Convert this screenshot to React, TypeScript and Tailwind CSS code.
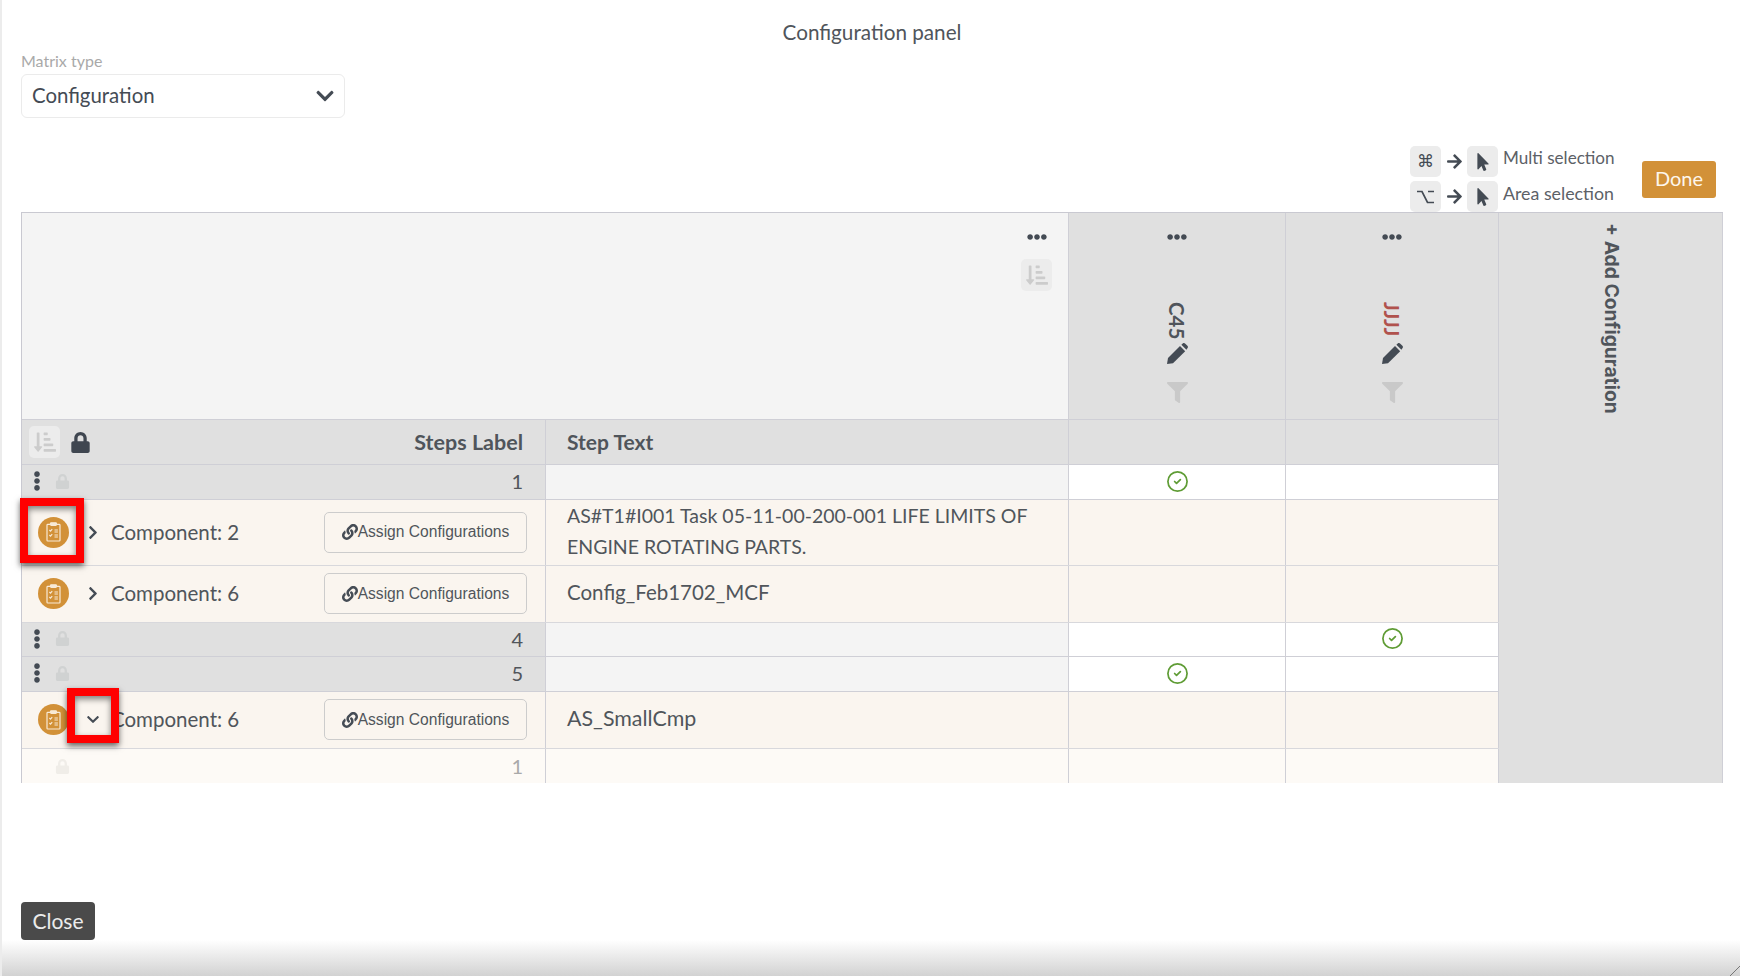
import React from "react";
import {
  FaEllipsisH,
  FaEllipsisV,
  FaFilter,
  FaLock,
  FaSortAmountDownAlt,
  FaLink,
  FaArrowRight,
  FaChevronDown,
  FaChevronRight,
  FaMousePointer,
} from "react-icons/fa";
import { CircleCheck } from "lucide-react";

const cols = "grid grid-cols-[524px_523px_217px_213px]";
const line = "border-r border-[#cfcfd6]";
const font = "font-['Lato','Liberation_Sans',sans-serif]";

function SortBtn() {
  return (
    <div className="w-[31px] h-[32px] rounded-[5px] bg-[#ececec] flex items-center justify-center text-[#cccccc]">
      <FaSortAmountDownAlt size={22} />
    </div>
  );
}

function ClipIcon() {
  return (
    <div className="w-[31px] h-[31px] rounded-full bg-[#d29138] flex items-center justify-center shrink-0">
      <svg width="17" height="20" viewBox="0 0 17 20" fill="none" stroke="#f8ead6" strokeWidth="1.2">
        <rect x="2" y="2.4" width="13" height="16.6" rx="0.8" />
        <rect x="5.5" y="0.8" width="6" height="2.6" rx="0.8" fill="#f8ead6" />
        <path d="M4.4 8l1.1 1.1 1.7-2M4.4 13l1.1 1.1 1.7-2" />
        <path d="M9.5 8h3.4M9.5 10h3.4M9.5 13h3.4M9.5 15h3.4" />
      </svg>
    </div>
  );
}

function Pencil() {
  return (
    <svg width="21" height="21" viewBox="0 0 21 21" fill="#444b54" className="mt-[3px]">
      <path d="M0 21L1 15L13 3L18.2 8.2L6 20.2Z" />
      <path d="M14.4 1.7L15.7 0.6C16.6 -0.1 17.6 0 18.3 0.7L20.4 2.8C21.1 3.6 21.1 4.5 20.4 5.3L19.4 6.7Z" />
    </svg>
  );
}

function CheckCell({ on }: { on?: boolean }) {
  return (
    <div className={`bg-white flex items-center justify-center pb-[2px] ${line}`}>
      {on && <CircleCheck size={23} strokeWidth={1.8} className="text-[#5f9c35]" />}
    </div>
  );
}

function GrayRow({ n, h, a, b }: { n: string; h: string; a?: boolean; b?: boolean }) {
  return (
    <div className={`${cols} ${h} border-b border-[#cfcfd6]`}>
      <div className={`bg-[#e0e0e0] flex items-center pl-[11px] pr-[22px] pb-[2px] ${line}`}>
        <FaEllipsisV size={20} className="text-[#444b54] w-[8px]" />
        <FaLock size={15} className="ml-[14px] text-[#d0d2d2]" />
        <span className="ml-auto text-[20px] text-[#50555b]">{n}</span>
      </div>
      <div className={`bg-[#f4f4f4] ${line}`} />
      <CheckCell on={a} />
      <CheckCell on={b} />
    </div>
  );
}

function CompRow({
  name,
  text,
  h,
  open,
  size,
}: {
  name: string;
  text: React.ReactNode;
  h: string;
  open?: boolean;
  size: string;
}) {
  return (
    <div className={`${cols} ${h} border-b border-[#d8d8dc] bg-[#faf5ef]`}>
      <div className={`flex items-center pl-[16px] pr-[18px] pb-[1px] ${line}`}>
        <ClipIcon />
        <div className="w-[12px] ml-[18px] flex justify-center text-[#454c55]">
          {open ? <FaChevronDown size={15} /> : <FaChevronRight size={15} />}
        </div>
        <span className="ml-[12px] text-[20.5px] text-[#50555b]">{name}</span>
        <button className="ml-auto w-[203px] h-[41px] rounded-[5px] border border-[#cccccc] flex items-center justify-center font-['Liberation_Sans',sans-serif] text-[15.6px] text-[#50555b]">
          <FaLink size={16} className="text-[#454c55]" />
          Assign Configurations
        </button>
      </div>
      <div className={`flex items-center pl-[21px] pr-[20px] pb-[3px] leading-[31px] text-[#50555b] ${size} ${line}`}>
        <div>{text}</div>
      </div>
      <div className={line} />
      <div className={line} />
    </div>
  );
}

function ColHead({ label, red }: { label: string; red?: boolean }) {
  return (
    <div className={`bg-[#e0e0e0] flex flex-col items-center pt-[14px] ${line}`}>
      <FaEllipsisH size={20} className="text-[#444b54]" />
      <span
        className={`mt-[55px] h-[38px] [writing-mode:vertical-rl] text-[20.5px] leading-[22px] font-bold ${
          red ? "text-[#b0524d]" : "text-[#50555b]"
        }`}
      >
        {label}
      </span>
      <Pencil />
      <FaFilter size={21} className="mt-[18px] text-[#c9c9c9]" />
    </div>
  );
}

function KeyRow({ glyph, label, size }: { glyph: React.ReactNode; label: string; size: string }) {
  return (
    <div className="flex items-center h-[31px]">
      <div className="w-[31px] h-[31px] rounded-[5px] bg-[#ececec] flex items-center justify-center font-['DejaVu_Sans',sans-serif] text-[17px] text-[#444b54]">
        {glyph}
      </div>
      <FaArrowRight size={17} className="mx-[4.5px] text-[#444b54]" />
      <div className="w-[31px] h-[31px] rounded-[5px] bg-[#ececec] flex items-center justify-center text-[#444b54]">
        <FaMousePointer size={18} />
      </div>
      <span className={`ml-[5px] w-[112px] mb-[7px] whitespace-nowrap text-[#5c6167] ${size}`}>{label}</span>
    </div>
  );
}

function OptionGlyph() {
  return (
    <svg width="17" height="14" viewBox="0 0 17 14" fill="none" stroke="#444b54" strokeWidth="1.7">
      <path d="M0 1.5h5l5.5 11H17M11 1.5h6" />
    </svg>
  );
}

export default function App() {
  return (
    <div className={`relative w-[1740px] h-[976px] overflow-hidden bg-white flex flex-col border-l-2 border-[#ececec] text-[#50555b] ${font}`}>
      <div className="pl-[19px] pr-[17px] flex flex-col flex-1">
        <div className="pt-[19px] text-center text-[20.7px] leading-[26px] text-[#50555b]">Configuration panel</div>
        <div className="mt-[6px] text-[16px] leading-[20px] text-[#a9a9a9]">Matrix type</div>
        <div className="mt-[3px] w-[324px] h-[44px] rounded-[6px] border border-[#ebebeb] flex items-center pl-[10px] pr-[9px]">
          <span className="text-[20.4px] pb-[2px] text-[#444b54]">Configuration</span>
          <FaChevronDown size={20} className="ml-auto text-[#444b54]" />
        </div>
        <div className="mt-[28px] h-[66px] flex justify-end items-start">
          <div className="flex flex-col gap-[4px]">
            <KeyRow glyph="⌘" label="Multi selection" size="text-[17.1px]" />
            <KeyRow glyph={<OptionGlyph />} label="Area selection" size="text-[17.8px]" />
          </div>
          <button className="ml-[27px] mr-[7px] mt-[15px] w-[74px] h-[37px] pb-[4px] rounded-[3px] bg-[#d29138] text-[20px] text-[#fdf6ec]">
            Done
          </button>
        </div>

        <div className="flex h-[571px] border-l border-t border-[#c9c9d1]">
          <div className="w-[1477px] flex flex-col">
            <div className={`${cols} h-[207px] border-b border-[#cfcfd6]`}>
              <div className={`col-span-2 bg-[#f4f4f4] flex flex-col items-end pt-[14px] pr-[16px] ${line}`}>
                <FaEllipsisH size={20} className="text-[#444b54] mr-[5px]" />
                <div className="mt-[12px]">
                  <SortBtn />
                </div>
              </div>
              <ColHead label="C45" />
              <ColHead label="JJJJ" red />
            </div>
            <div className={`${cols} h-[45px] border-b border-[#cfcfd6] bg-[#e0e0e0]`}>
              <div className={`flex items-center pl-[7px] pr-[22px] ${line}`}>
                <SortBtn />
                <FaLock size={21} className="ml-[10px] text-[#3f4650]" />
                <span className="ml-auto text-[21.5px] font-bold text-[#50555b]">Steps Label</span>
              </div>
              <div className={`flex items-center pl-[21px] text-[21px] font-bold text-[#50555b] ${line}`}>Step Text</div>
              <div className={line} />
              <div className={line} />
            </div>
            <GrayRow n="1" h="h-[35px]" a />
            <CompRow
              name="Component: 2"
              h="h-[66px]"
              size="text-[19.5px]"
              text={
                <>
                  AS#T1#I001 Task 05-11-00-200-001 LIFE LIMITS OF
                  <br />
                  ENGINE ROTATING PARTS.
                </>
              }
            />
            <CompRow name="Component: 6" h="h-[57px]" size="text-[20.5px]" text="Config_Feb1702_MCF" />
            <GrayRow n="4" h="h-[34px]" b />
            <GrayRow n="5" h="h-[35px]" a />
            <CompRow name="Component: 6" h="h-[57px]" size="text-[21.4px]" text="AS_SmallCmp" open />
            <div className={`${cols} flex-1 bg-[#fdfaf6]`}>
              <div className={`flex items-center pl-[33px] pr-[22px] ${line}`}>
                <FaLock size={15} className="text-[#f0ede8]" />
                <span className="ml-auto text-[20px] text-[#a9a9a9]">1</span>
              </div>
              <div className={line} />
              <div className={line} />
              <div className={line} />
            </div>
          </div>
          <div className="w-[224px] bg-[#e0e0e0] border-r border-[#cfcfd6] flex justify-center pt-[10px] pl-[3px]">
            <span className="[writing-mode:vertical-rl] h-fit text-[19.3px] leading-[24px] font-bold font-['Inter',sans-serif] text-[#50555b]">
              + Add Configuration
            </span>
          </div>
        </div>

        <button className="mt-auto w-[74px] h-[38px] pb-[1px] rounded-[4px] bg-[#4a4a4a] text-[21px] text-[#ececec]">Close</button>
      </div>
      <div className="h-[36px] bg-gradient-to-b from-[#ffffff] to-[#d2d2d2]" />

      <div className="absolute left-[18px] top-[498px] w-[64px] h-[65px] border-8 border-[#ff0000] shadow-[0_3px_6px_rgba(0,0,0,0.6),inset_0_3px_6px_rgba(0,0,0,0.5)]" />
      <div className="absolute left-[65px] top-[688px] w-[52px] h-[55px] border-8 border-[#ff0000] shadow-[0_3px_6px_rgba(0,0,0,0.6),inset_0_3px_6px_rgba(0,0,0,0.5)]" />
      <svg className="absolute right-0 bottom-0" width="10" height="10" viewBox="0 0 10 10">
        <path d="M0 10L10 0" stroke="#777777" strokeWidth="1" />
      </svg>
    </div>
  );
}
